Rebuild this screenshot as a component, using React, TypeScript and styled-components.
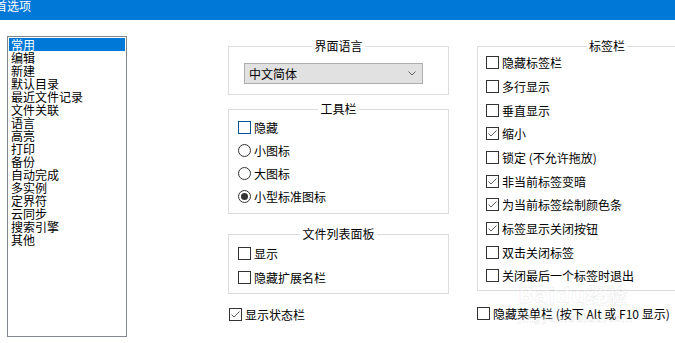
import React from "react";
import styled, { createGlobalStyle, css } from "styled-components";

const GlobalStyle = createGlobalStyle`
  html, body {
    margin: 0;
    padding: 0;
    background: #ffffff;
    overflow: hidden;
  }
  body {
    font-family: "Noto Sans CJK SC", "Microsoft YaHei", sans-serif;
    font-size: 12px;
    color: #000000;
  }
`;

const Window = styled.div`
  position: relative;
  width: 675px;
  height: 343px;
  overflow: hidden;
  background: #ffffff;
`;

const TitleBar = styled.div`
  height: 20px;
  background: #0078d7;
  overflow: hidden;
`;

const TitleText = styled.div`
  margin-left: -5px;
  margin-top: -1px;
  font-size: 12px;
  line-height: 13px;
  color: #ffffff;
  white-space: nowrap;
`;

const Body = styled.div`
  display: flex;
  align-items: flex-start;
  padding-top: 16px;
`;

const ListBox = styled.div`
  flex-shrink: 0;
  margin-left: 7px;
  width: 120px;
  height: 301px;
  box-sizing: border-box;
  border: 1px solid #828790;
  padding: 1px;
  display: flex;
  flex-direction: column;
`;

const ListItem = styled.div<{ $selected?: boolean }>`
  height: 13px;
  line-height: 13px;
  padding-left: 2px;
  font-size: 12px;
  white-space: nowrap;
  ${(p) =>
    p.$selected &&
    css`
      background: #0078d7;
      color: #ffffff;
    `}
`;

const Column = styled.div<{ $ml: number; $w: number }>`
  flex-shrink: 0;
  margin-left: ${(p) => p.$ml}px;
  width: ${(p) => p.$w}px;
  padding-top: 10px;
  display: flex;
  flex-direction: column;
`;

const Group = styled.div<{ $mt?: number; $pb: number }>`
  margin-top: ${(p) => p.$mt ?? 0}px;
  border: 1px solid #dcdcdc;
  padding-bottom: ${(p) => p.$pb}px;
  display: flex;
  flex-direction: column;
`;

const GroupTitle = styled.div<{ $mb?: number }>`
  align-self: center;
  margin-top: -9px;
  margin-bottom: ${(p) => p.$mb ?? 0}px;
  height: 16px;
  line-height: 16px;
  padding: 0 2px;
  background: #ffffff;
  font-size: 12px;
  white-space: nowrap;
`;

const Combo = styled.div`
  margin: 9px 0 0 15px;
  width: 179px;
  height: 21px;
  box-sizing: border-box;
  border: 1px solid #adadad;
  background: #e1e1e1;
  display: flex;
  align-items: center;
  justify-content: space-between;
  padding: 0 6px 0 4px;
  font-size: 12px;
`;

const Row = styled.div<{ $h: number; $pl: number }>`
  height: ${(p) => p.$h}px;
  padding-left: ${(p) => p.$pl}px;
  display: flex;
  align-items: center;
  gap: 3px;
  white-space: nowrap;
  font-size: 12px;
`;

const StandaloneRow = styled(Row)<{ $mt: number }>`
  margin-top: ${(p) => p.$mt}px;
`;

const Box = styled.span<{ $focus?: boolean }>`
  flex-shrink: 0;
  width: 13px;
  height: 13px;
  box-sizing: border-box;
  border: 1px solid ${(p) => (p.$focus ? "#005499" : "#333333")};
  background: #ffffff;
  display: flex;
  align-items: center;
  justify-content: center;
`;

const RadioCircle = styled.span`
  flex-shrink: 0;
  width: 13px;
  height: 13px;
  box-sizing: border-box;
  border: 1px solid #333333;
  border-radius: 50%;
  background: #ffffff;
  display: flex;
  align-items: center;
  justify-content: center;
`;

const RadioDot = styled.span`
  width: 7px;
  height: 7px;
  border-radius: 50%;
  background: #333333;
`;

const Watermark = styled.div`
  position: absolute;
  left: 518px;
  top: 284px;
  display: flex;
  flex-direction: column;
  align-items: flex-start;
  pointer-events: none;
  color: rgba(255, 255, 255, 0.3);
  -webkit-text-stroke: 1px rgba(0, 0, 0, 0.07);
  font-family: "DejaVu Sans", "Noto Sans CJK SC", sans-serif;
`;

const WatermarkBig = styled.div`
  font-size: 21px;
  font-weight: bold;
  line-height: 24px;
  white-space: nowrap;
`;

const WatermarkSmall = styled.div`
  font-size: 11px;
  line-height: 14px;
  font-weight: bold;
  margin-top: 4px;
  white-space: nowrap;
`;

const CheckMark = () => (
  <svg width="11" height="11" viewBox="0 0 11 11">
    <path d="M1.5 5.5 L4 8 L9.5 2.5" fill="none" stroke="#5a5a5a" strokeWidth="1" />
  </svg>
);

const CheckBox: React.FC<{ checked?: boolean; focus?: boolean }> = ({ checked, focus }) => (
  <Box $focus={focus}>{checked && <CheckMark />}</Box>
);

const Radio: React.FC<{ checked?: boolean }> = ({ checked }) => (
  <RadioCircle>{checked && <RadioDot />}</RadioCircle>
);

const Chevron = () => (
  <svg width="8" height="5" viewBox="0 0 8 5">
    <path d="M0.5 0.5 L4 4 L7.5 0.5" fill="none" stroke="#606060" strokeWidth="1" />
  </svg>
);

const listItems = [
  "常用",
  "编辑",
  "新建",
  "默认目录",
  "最近文件记录",
  "文件关联",
  "语言",
  "高亮",
  "打印",
  "备份",
  "自动完成",
  "多实例",
  "定界符",
  "云同步",
  "搜索引擎",
  "其他",
];

const tabItems: { label: string; checked: boolean }[] = [
  { label: "隐藏标签栏", checked: false },
  { label: "多行显示", checked: false },
  { label: "垂直显示", checked: false },
  { label: "缩小", checked: true },
  { label: "锁定 (不允许拖放)", checked: false },
  { label: "非当前标签变暗", checked: true },
  { label: "为当前标签绘制颜色条", checked: true },
  { label: "标签显示关闭按钮", checked: true },
  { label: "双击关闭标签", checked: false },
  { label: "关闭最后一个标签时退出", checked: false },
];

export default function App() {
  return (
    <>
      <GlobalStyle />
      <Window>
        <TitleBar>
          <TitleText>首选项</TitleText>
        </TitleBar>
        <Body>
          <ListBox>
            {listItems.map((item, i) => (
              <ListItem key={item} $selected={i === 0}>
                {item}
              </ListItem>
            ))}
          </ListBox>

          <Column $ml={101} $w={221}>
            <Group $pb={10}>
              <GroupTitle>界面语言</GroupTitle>
              <Combo>
                <span>中文简体</span>
                <Chevron />
              </Combo>
            </Group>

            <Group $mt={14} $pb={5}>
              <GroupTitle $mb={-1}>工具栏</GroupTitle>
              <Row $h={23} $pl={9}>
                <CheckBox focus />
                <span>隐藏</span>
              </Row>
              <Row $h={23} $pl={9}>
                <Radio />
                <span>小图标</span>
              </Row>
              <Row $h={23} $pl={9}>
                <Radio />
                <span>大图标</span>
              </Row>
              <Row $h={23} $pl={9}>
                <Radio checked />
                <span>小型标准图标</span>
              </Row>
            </Group>

            <Group $mt={20} $pb={4}>
              <GroupTitle $mb={-1}>文件列表面板</GroupTitle>
              <Row $h={24} $pl={9}>
                <CheckBox />
                <span>显示</span>
              </Row>
              <Row $h={24} $pl={9}>
                <CheckBox />
                <span>隐藏扩展名栏</span>
              </Row>
            </Group>

            <StandaloneRow $mt={9} $h={22} $pl={1}>
              <CheckBox checked />
              <span>显示状态栏</span>
            </StandaloneRow>
          </Column>

          <Column $ml={28} $w={260}>
            <Group $pb={2}>
              <GroupTitle $mb={-3}>标签栏</GroupTitle>
              {tabItems.map((t) => (
                <Row key={t.label} $h={23.67} $pl={8}>
                  <CheckBox checked={t.checked} />
                  <span>{t.label}</span>
                </Row>
              ))}
            </Group>
            <StandaloneRow $mt={12} $h={22} $pl={0}>
              <CheckBox />
              <span>隐藏菜单栏 (按下 Alt 或 F10 显示)</span>
            </StandaloneRow>
          </Column>
        </Body>
        <Watermark aria-hidden="true">
          <WatermarkBig>Baidu经验</WatermarkBig>
          <WatermarkSmall>jingyan.baidu.com</WatermarkSmall>
        </Watermark>
      </Window>
    </>
  );
}
